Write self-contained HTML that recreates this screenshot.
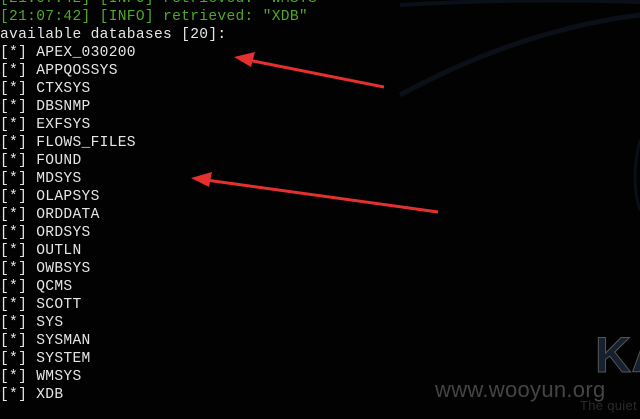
<html><head><style>
body{margin:0;width:640px;height:419px;background:#020203;overflow:hidden;position:relative;font-family:"Liberation Mono",monospace;font-size:14.6px;letter-spacing:0.3px;color:#e6e6e6}
.l{position:absolute;left:0;white-space:pre;line-height:18px}
.g{color:#4fa82a}
</style></head><body>
<svg width="640" height="419" style="position:absolute;left:0;top:0">
<path d="M400 95 Q520 30 640 15" stroke="#0a0f18" stroke-width="5" fill="none"/>
<path d="M400 5 Q520 -2 640 2" stroke="#0a0f18" stroke-width="4" fill="none"/>
<path d="M640 140 Q630 180 640 210" stroke="#0a0f18" stroke-width="3" fill="none"/>
<path d="M384 87 L248 60" stroke="#e53030" stroke-width="3"/>
<polygon points="234,57 255,52 251,67" fill="#e53030"/>
<path d="M438 212 L206 180" stroke="#e53030" stroke-width="3"/>
<polygon points="191,178 212,172 209,187" fill="#e53030"/>
<text x="595" y="372" font-family="Liberation Sans" font-weight="bold" font-size="50" fill="#16202e" stroke="#555" stroke-width="1">KA</text>
<text x="435" y="397" font-family="Liberation Sans" font-size="22" fill="#444">www.wooyun.org</text>
<text x="580" y="410" font-family="Liberation Sans" font-size="13" fill="#2a2a2a">The quiet</text>
</svg>
<div class="l g" style="top:-10px">[21:07:42] [INFO] retrieved: "WMSYS"</div>
<div class="l g" style="top:8px">[21:07:42] [INFO] retrieved: "XDB"</div>
<div class="l" style="top:26px">available databases [20]:</div>
<div class="l" style="top:44px">[*] APEX_030200
[*] APPQOSSYS
[*] CTXSYS
[*] DBSNMP
[*] EXFSYS
[*] FLOWS_FILES
[*] FOUND
[*] MDSYS
[*] OLAPSYS
[*] ORDDATA
[*] ORDSYS
[*] OUTLN
[*] OWBSYS
[*] QCMS
[*] SCOTT
[*] SYS
[*] SYSMAN
[*] SYSTEM
[*] WMSYS
[*] XDB</div>
</body></html>
